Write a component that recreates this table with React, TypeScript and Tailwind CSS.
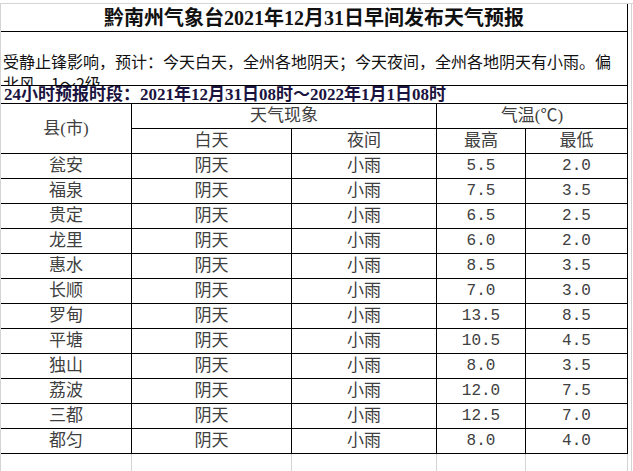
const rows = [
  { name: '瓮安', day: '阴天', night: '小雨', hi: '5.5', lo: '2.0' },
  { name: '福泉', day: '阴天', night: '小雨', hi: '7.5', lo: '3.5' },
  { name: '贵定', day: '阴天', night: '小雨', hi: '6.5', lo: '2.5' },
  { name: '龙里', day: '阴天', night: '小雨', hi: '6.0', lo: '2.0' },
  { name: '惠水', day: '阴天', night: '小雨', hi: '8.5', lo: '3.5' },
  { name: '长顺', day: '阴天', night: '小雨', hi: '7.0', lo: '3.0' },
  { name: '罗甸', day: '阴天', night: '小雨', hi: '13.5', lo: '8.5' },
  { name: '平塘', day: '阴天', night: '小雨', hi: '10.5', lo: '4.5' },
  { name: '独山', day: '阴天', night: '小雨', hi: '8.0', lo: '3.5' },
  { name: '荔波', day: '阴天', night: '小雨', hi: '12.0', lo: '7.5' },
  { name: '三都', day: '阴天', night: '小雨', hi: '12.5', lo: '7.0' },
  { name: '都匀', day: '阴天', night: '小雨', hi: '8.0', lo: '4.0' },
]

const serif = "font-['Liberation_Serif','Noto_Sans_CJK_SC',serif]"
const cell = 'flex items-center justify-center border-r border-b border-black'

export default function App() {
  return (
    <div className="w-[633px] h-[471px] bg-white overflow-hidden pt-[3px]">
      <div className="h-[468px] flex border-t border-l border-[#d4d4d4]">
        <div className="w-[627px] flex flex-col">
          {/* title */}
          <div className={`h-[28px] shrink-0 flex items-center justify-center border-r border-b border-black text-[20px] font-bold text-[#111] ${serif}`}>
            黔南州气象台2021年12月31日早间发布天气预报
          </div>

          {/* description */}
          <div className="h-[54px] shrink-0 overflow-hidden border-r border-b border-black pt-[18px] pl-[2px] pr-[10px] text-[16px] leading-[22px] text-[#111] font-['Noto_Sans_CJK_SC',sans-serif]">
            受静止锋影响，预计：今天白天，全州各地阴天；今天夜间，全州各地阴天有小雨。偏北风，1～2级。
          </div>

          {/* period */}
          <div className={`h-[18px] shrink-0 overflow-hidden border-r border-b border-black pl-[3px] text-[17px] leading-[18px] font-bold text-[#1b1440] whitespace-nowrap ${serif}`}>
            24小时预报时段：2021年12月31日08时～2022年1月1日08时
          </div>

          {/* table */}
          <div className={`grid grid-cols-[131px_160px_145px_89px_102px] auto-rows-[25px] text-[17px] text-[#404040] ${serif}`}>
            <div className={`${cell} row-span-2`}>县(市)</div>
            <div className={`${cell} col-span-2`}>天气现象</div>
            <div className={`${cell} col-span-2`}>气温(℃)</div>
            <div className={cell}>白天</div>
            <div className={cell}>夜间</div>
            <div className={cell}>最高</div>
            <div className={cell}>最低</div>
            {rows.map((r) => (
              <>
                <div key={r.name + 'n'} className={cell}>{r.name}</div>
                <div key={r.name + 'd'} className={cell}>{r.day}</div>
                <div key={r.name + 'x'} className={cell}>{r.night}</div>
                <div key={r.name + 'h'} className={`${cell} font-['Liberation_Mono',monospace] text-[16px]`}>{r.hi}</div>
                <div key={r.name + 'l'} className={`${cell} font-['Liberation_Mono',monospace] text-[16px]`}>{r.lo}</div>
              </>
            ))}
          </div>

          {/* empty sheet grid below */}
          <div className="flex-1 grid grid-cols-[131px_160px_145px_89px_102px]">
            <div className="border-r border-[#d4d4d4]" />
            <div className="border-r border-[#d4d4d4]" />
            <div className="border-r border-[#d4d4d4]" />
            <div className="border-r border-[#d4d4d4]" />
            <div className="border-r border-[#d4d4d4]" />
          </div>
        </div>
        <div className="w-[4px] border-r border-[#d4d4d4]" />
      </div>
    </div>
  )
}
